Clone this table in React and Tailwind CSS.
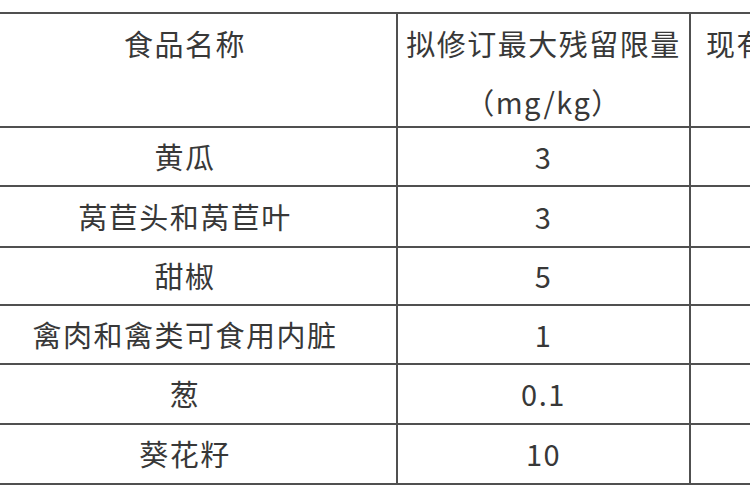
import React from "react";

const rows = [
  { name: "黄瓜", v: "3", h: "h-[59px]" },
  { name: "莴苣头和莴苣叶", v: "3", h: "h-[61px]" },
  { name: "甜椒", v: "5", h: "h-[58px]" },
  { name: "禽肉和禽类可食用内脏", v: "1", h: "h-[59px]" },
  { name: "葱", v: "0.1", h: "h-[60px]" },
  { name: "葵花籽", v: "10", h: "h-[60px]" },
];

export default function App() {
  return (
    <div
      className="w-[750px] h-[500px] overflow-hidden bg-white text-[#383838] text-[29px] tracking-[1.5px]"
      style={{ fontFamily: '"Noto Sans CJK SC", "Noto Sans", sans-serif' }}
    >
      <div className="mt-[12px] ml-[-26px] w-[1100px] border-t-2 border-[#505050]">
        <div className="flex h-[114px] border-b-2 border-[#505050] leading-[58px]">
          <div className="w-[424px] shrink-0 border-r-2 border-[#505050] text-center">食品名称</div>
          <div className="w-[293px] shrink-0 border-r-2 border-[#505050] text-center">
            <div>拟修订最大残留限量</div>
            <div>（mg/kg）</div>
          </div>
          <div className="flex-1 pl-[15px] whitespace-nowrap">现有最大残留限量</div>
        </div>
        {rows.map((r, i) => (
          <div key={i} className={`flex ${r.h} border-b-2 border-[#505050]`}>
            <div className="w-[424px] shrink-0 border-r-2 border-[#505050] flex items-center justify-center">
              {r.name}
            </div>
            <div className="w-[293px] shrink-0 border-r-2 border-[#505050] flex items-center justify-center">
              {r.v}
            </div>
            <div className="flex-1"></div>
          </div>
        ))}
      </div>
    </div>
  );
}
